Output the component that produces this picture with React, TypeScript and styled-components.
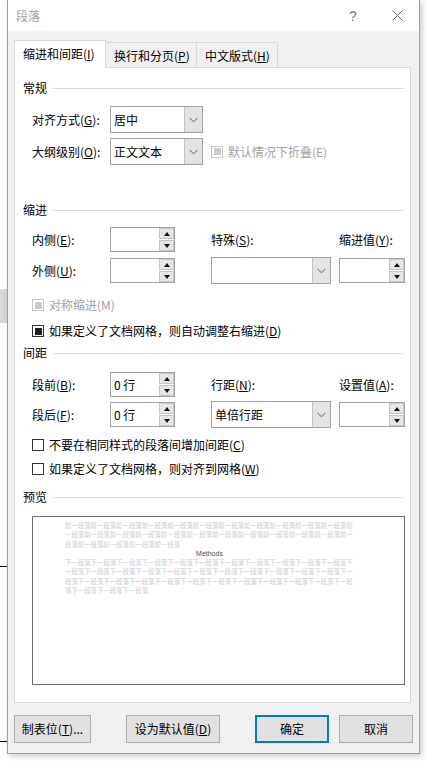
import React from "react";
import styled, { createGlobalStyle } from "styled-components";

const GlobalStyle = createGlobalStyle`
  html, body {
    margin: 0;
    padding: 0;
    background: #fff;
  }
  body {
    font-family: "Noto Sans CJK SC", "Noto Sans", sans-serif;
    font-size: 12px;
    line-height: 16px;
    color: #000;
  }
  u {
    text-underline-offset: 1px;
  }
`;

const Page = styled.div`
    display: flex;
    width: 427px;
    height: 762px;
    overflow: hidden;
`;

// bits of the document that peek out behind the dialog
const Backdrop = styled.div`
    flex: none;
    width: 7px;
    display: flex;
    flex-direction: column;
`;

const BackdropBar = styled.div<{ $top: number; $h: number; $color: string }>`
    margin-top: ${p => p.$top}px;
    height: ${p => p.$h}px;
    background: ${p => p.$color};
`;

const Dialog = styled.div`
    flex: none;
    box-sizing: border-box;
    width: 413px;
    height: 754px;
    border: 1px solid #9f9f9f;
    border-top: none;
    background: #f0f0f0;
    box-shadow: 2px 2px 6px rgba(0, 0, 0, 0.22);
    display: flex;
    flex-direction: column;
`;

const TitleBar = styled.div`
    height: 31px;
    background: #fff;
    display: flex;
    align-items: center;
    padding-left: 8px;
`;

const Title = styled.span`
    color: #a0a0a0;
    flex: 1;
`;

const TitleButton = styled.div`
    width: 44px;
    height: 31px;
    display: flex;
    align-items: center;
    justify-content: center;
    color: #7a7a7a;
    font-family: "Liberation Sans", sans-serif;
    font-size: 14px;
`;

const Body = styled.div`
    flex: 1;
    padding: 9px 6px 10px 6px;
    display: flex;
    flex-direction: column;
`;

const TabStrip = styled.div`
    height: 27px;
    display: flex;
    align-items: flex-end;
`;

const Tab = styled.div<{ $active?: boolean; $w: number }>`
    box-sizing: border-box;
    width: ${p => p.$w}px;
    height: ${p => (p.$active ? 28 : 25)}px;
    margin-bottom: ${p => (p.$active ? -1 : 0)}px;
    margin-left: -1px;
    &:first-child { margin-left: 0; }
    position: relative;
    z-index: ${p => (p.$active ? 2 : 1)};
    border: 1px solid #d9d9d9;
    border-bottom: none;
    background: ${p => (p.$active ? "#fff" : "#f0f0f0")};
    padding: ${p => (p.$active ? "0 0 1px 8px" : "2px 0 0 8px")};
    display: flex;
    align-items: center;
    white-space: nowrap;
`;

const Panel = styled.div`
    box-sizing: border-box;
    width: 397px;
    height: 636px;
    background: #fff;
    border: 1px solid #d9d9d9;
    padding: 12px 6px 0 8px;
    display: flex;
    flex-direction: column;
`;

const SectionHeader = styled.div<{ $mt: number }>`
    margin-top: ${p => p.$mt}px;
    height: 16px;
    display: flex;
    align-items: center;
`;

const SectionRule = styled.div`
    flex: 1;
    height: 1px;
    margin-left: 5px;
    background: #dcdcdc;
`;

const FieldRow = styled.div<{ $mt: number; $h: number }>`
    margin-top: ${p => p.$mt}px;
    margin-left: 9px;
    height: ${p => p.$h}px;
    display: grid;
    grid-template-columns: 78px 101px 128px 65px;
    align-items: center;
`;

const Label = styled.span`
    white-space: nowrap;
`;

const Select = styled.div<{ $w: number }>`
    box-sizing: border-box;
    width: ${p => p.$w}px;
    height: 27px;
    border: 1px solid #a2a2a2;
    background: #fff;
    display: flex;
`;

const SelectValue = styled.div`
    flex: 1;
    padding-left: 3px;
    display: flex;
    align-items: center;
`;

const DropButton = styled.div`
    width: 17px;
    background: #e3e3e3;
    border-left: 1px solid #c4c4c4;
    display: flex;
    align-items: center;
    justify-content: center;
`;

const Spin = styled.div<{ $w: number }>`
    box-sizing: border-box;
    width: ${p => p.$w}px;
    height: 25px;
    border: 1px solid #a2a2a2;
    background: #fff;
    display: flex;
`;

const SpinValue = styled.div`
    flex: 1;
    padding-left: 3px;
    display: flex;
    align-items: center;
`;

const SpinButtons = styled.div`
    width: 15px;
    display: flex;
    flex-direction: column;
    gap: 1px;
`;

const SpinHalf = styled.div`
    flex: 1;
    box-sizing: border-box;
    background: #e6e6e6;
    border: 1px solid #c6c6c6;
    display: flex;
    align-items: center;
    justify-content: center;
`;

const Arrow = styled.div<{ $up?: boolean }>`
    width: 0;
    height: 0;
    border-left: 3px solid transparent;
    border-right: 3px solid transparent;
    ${p => (p.$up ? "border-bottom: 4px solid #111;" : "border-top: 4px solid #111;")}
`;

const CheckRow = styled.div<{ $mt?: number; $disabled?: boolean; $inline?: boolean }>`
    margin-top: ${p => p.$mt ?? 0}px;
    margin-left: ${p => (p.$inline ? 0 : 9)}px;
    height: 18px;
    display: flex;
    align-items: center;
    gap: 5px;
    white-space: nowrap;
    color: ${p => (p.$disabled ? "#a3a3a3" : "#000")};
    grid-column: ${p => (p.$inline ? "3 / 5" : "auto")};
`;

const Box = styled.div<{ $state: "off" | "mixed" | "disabled" }>`
    box-sizing: border-box;
    width: 12px;
    height: 12px;
    border: 1px solid ${p => (p.$state === "disabled" ? "#c9c9c9" : "#333")};
    background: #fff;
    display: flex;
    align-items: center;
    justify-content: center;
    &::after {
        content: "";
        display: ${p => (p.$state === "off" ? "none" : "block")};
        width: 7px;
        height: 7px;
        background: ${p => (p.$state === "disabled" ? "#cccccc" : "#222")};
    }
`;

const PreviewBox = styled.div`
    box-sizing: border-box;
    margin-top: 11px;
    margin-left: 9px;
    width: 373px;
    height: 169px;
    border: 1px solid #6e6e6e;
    background: #fff;
    padding: 4px 0 0 32px;
`;

const PreviewText = styled.div<{ $dark?: boolean }>`
    width: 289px;
    font-size: ${p => (p.$dark ? 7 : 6.4)}px;
    line-height: 9.3px;
    color: ${p => (p.$dark ? "#4a4a4a" : "#cbcbcb")};
    font-family: ${p => (p.$dark ? '"Liberation Sans", sans-serif' : '"Noto Sans CJK SC", sans-serif')};
    text-align: ${p => (p.$dark ? "center" : "left")};
    word-break: break-all;
`;

const ButtonRow = styled.div`
    margin-top: 12px;
    height: 28px;
    display: flex;
`;

const Button = styled.div<{ $w: number; $ml?: string; $primary?: boolean }>`
    box-sizing: border-box;
    width: ${p => p.$w}px;
    height: 28px;
    margin-left: ${p => p.$ml ?? "0"};
    background: #e1e1e1;
    border: ${p => (p.$primary ? "2px solid #0078d7" : "1px solid #adadad")};
    display: flex;
    align-items: center;
    justify-content: center;
    white-space: nowrap;
`;

const Chevron = () => (
    <svg width="9" height="6" viewBox="0 0 9 6">
        <path d="M0.5 0.8 L4.5 4.8 L8.5 0.8" fill="none" stroke="#606060" strokeWidth="1" />
    </svg>
);

const CloseIcon = () => (
    <svg width="11" height="11" viewBox="0 0 11 11">
        <path d="M0.5 0.5 L10.5 10.5 M10.5 0.5 L0.5 10.5" stroke="#6a6a6a" strokeWidth="1" />
    </svg>
);

const DropDown: React.FC<{ w: number; value?: string }> = ({ w, value }) => (
    <Select $w={w}>
        <SelectValue>{value}</SelectValue>
        <DropButton><Chevron /></DropButton>
    </Select>
);

const SpinBox: React.FC<{ w: number; value?: string }> = ({ w, value }) => (
    <Spin $w={w}>
        <SpinValue>{value}</SpinValue>
        <SpinButtons>
            <SpinHalf><Arrow $up /></SpinHalf>
            <SpinHalf><Arrow /></SpinHalf>
        </SpinButtons>
    </Spin>
);

const Section: React.FC<{ title: string; mt: number }> = ({ title, mt }) => (
    <SectionHeader $mt={mt}>
        <span>{title}</span>
        <SectionRule />
    </SectionHeader>
);

const before = "前一段落".repeat(27);
const after = "下一段落".repeat(37);

const App: React.FC = () => {
    return (
        <>
            <GlobalStyle />
            <Page>
                <Backdrop>
                    <BackdropBar $top={289} $h={34} $color="#d8d8d8" />
                    <BackdropBar $top={243} $h={1} $color="#000" />
                    <BackdropBar $top={174} $h={1} $color="#000" />
                </Backdrop>
                <Dialog>
                    <TitleBar>
                        <Title>段落</Title>
                        <TitleButton>?</TitleButton>
                        <TitleButton><CloseIcon /></TitleButton>
                    </TitleBar>
                    <Body>
                        <TabStrip>
                            <Tab $active $w={92}>缩进和间距(<u>I</u>)</Tab>
                            <Tab $w={92}>换行和分页(<u>P</u>)</Tab>
                            <Tab $w={82}>中文版式(<u>H</u>)</Tab>
                        </TabStrip>
                        <Panel>
                            <Section title="常规" mt={0} />
                            <FieldRow $mt={10} $h={27}>
                                <Label>对齐方式(<u>G</u>):</Label>
                                <DropDown w={93} value="居中" />
                            </FieldRow>
                            <FieldRow $mt={5} $h={27}>
                                <Label>大纲级别(<u>O</u>):</Label>
                                <DropDown w={93} value="正文文本" />
                                <CheckRow $inline $disabled>
                                    <Box $state="disabled" />
                                    默认情况下折叠(E)
                                </CheckRow>
                            </FieldRow>

                            <Section title="缩进" mt={37} />
                            <FieldRow $mt={9} $h={25}>
                                <Label>内侧(<u>E</u>):</Label>
                                <SpinBox w={65} />
                                <Label>特殊(<u>S</u>):</Label>
                                <Label>缩进值(<u>Y</u>):</Label>
                            </FieldRow>
                            <FieldRow $mt={5} $h={27}>
                                <Label>外侧(<u>U</u>):</Label>
                                <SpinBox w={65} />
                                <DropDown w={120} />
                                <SpinBox w={66} />
                            </FieldRow>
                            <CheckRow $mt={12} $disabled>
                                <Box $state="disabled" />
                                对称缩进(M)
                            </CheckRow>
                            <CheckRow $mt={8}>
                                <Box $state="mixed" />
                                <span>如果定义了文档网格，则自动调整右缩进(<u>D</u>)</span>
                            </CheckRow>

                            <Section title="间距" mt={5} />
                            <FieldRow $mt={11} $h={25}>
                                <Label>段前(<u>B</u>):</Label>
                                <SpinBox w={65} value="0 行" />
                                <Label>行距(<u>N</u>):</Label>
                                <Label>设置值(<u>A</u>):</Label>
                            </FieldRow>
                            <FieldRow $mt={4} $h={27}>
                                <Label>段后(<u>F</u>):</Label>
                                <SpinBox w={65} value="0 行" />
                                <DropDown w={120} value="单倍行距" />
                                <SpinBox w={66} />
                            </FieldRow>
                            <CheckRow $mt={8}>
                                <Box $state="off" />
                                <span>不要在相同样式的段落间增加间距(<u>C</u>)</span>
                            </CheckRow>
                            <CheckRow $mt={6}>
                                <Box $state="off" />
                                <span>如果定义了文档网格，则对齐到网格(<u>W</u>)</span>
                            </CheckRow>

                            <Section title="预览" mt={11} />
                            <PreviewBox>
                                <PreviewText>{before}</PreviewText>
                                <PreviewText $dark>Methods</PreviewText>
                                <PreviewText>{after}</PreviewText>
                            </PreviewBox>
                        </Panel>
                        <ButtonRow>
                            <Button $w={77}>制表位(<u>T</u>)...</Button>
                            <Button $w={94} $ml="35px">设为默认值(<u>D</u>)</Button>
                            <Button $w={74} $ml="auto" $primary>确定</Button>
                            <Button $w={74} $ml="10px">取消</Button>
                        </ButtonRow>
                    </Body>
                </Dialog>
            </Page>
        </>
    );
};

export default App;
